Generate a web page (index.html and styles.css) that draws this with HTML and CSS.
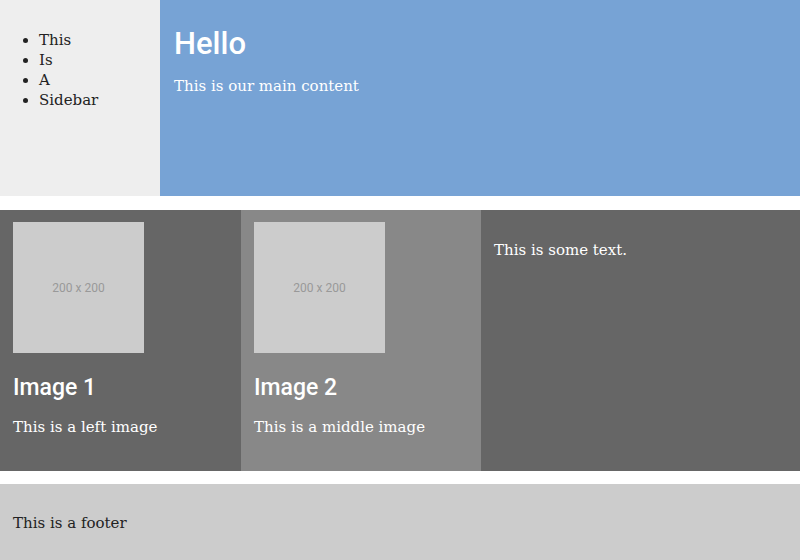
FILE: index.html
```html
<!DOCTYPE html>
<html>
<head>
<meta charset="utf-8">
<link rel="stylesheet" href="styles.css">
</head>
<body>
<div class="page">
  <div class="top">
    <aside class="sidebar">
      <ul class="side-list">
        <li>This</li>
        <li>Is</li>
        <li>A</li>
        <li>Sidebar</li>
      </ul>
    </aside>
    <main class="main">
      <h1 class="title">Hello</h1>
      <p class="text">This is our main content</p>
    </main>
  </div>
  <div class="row">
    <div class="col dark">
      <div class="ph">200 x 200</div>
      <h2 class="sub">Image 1</h2>
      <p class="text">This is a left image</p>
    </div>
    <div class="col mid">
      <div class="ph">200 x 200</div>
      <h2 class="sub">Image 2</h2>
      <p class="text">This is a middle image</p>
    </div>
    <div class="col dark">
      <p class="text first">This is some text.</p>
    </div>
  </div>
  <footer class="footer">
    <p class="text">This is a footer</p>
  </footer>
</div>
</body>
</html>
```

FILE: styles.css
```css
html, body {
  margin: 0;
  padding: 0;
  background: #fff;
}
.page {
  width: 800px;
  height: 560px;
  display: flex;
  flex-direction: column;
  font-family: "DejaVu Serif", serif;
}
.top {
  height: 196px;
  display: flex;
}
.sidebar {
  width: 160px;
  background: #eeeeee;
  color: #222;
}
.side-list {
  margin: 30px 0 0 0;
  padding-left: 39px;
  font-size: 15px;
  line-height: 20px;
}
.main {
  flex: 1;
  background: #77a3d5;
  color: #fff;
  padding: 0 14px;
}
.title {
  font-family: Roboto, sans-serif;
  font-weight: 500;
  font-size: 31px;
  line-height: 38px;
  margin: 25px 0 0 0;
}
.text {
  font-size: 15px;
  line-height: 20px;
  margin: 0;
}
.main .text {
  margin-top: 13px;
}
.row {
  margin-top: 14px;
  height: 261px;
  display: grid;
  grid-template-columns: 241px 240px 319px;
  color: #fff;
}
.col {
  padding: 12px 13px;
}
.dark { background: #666666; }
.mid { background: #888888; }
.ph {
  width: 131px;
  height: 131px;
  background: #cccccc;
  color: #999;
  font-family: Roboto, sans-serif;
  font-size: 12px;
  display: flex;
  align-items: center;
  justify-content: center;
}
.sub {
  font-family: Roboto, sans-serif;
  font-weight: 500;
  font-size: 23px;
  line-height: 30px;
  margin: 20px 0 0 0;
}
.col .text {
  margin-top: 14px;
}
.col .text.first {
  margin-top: 18px;
}
.footer {
  margin-top: 13px;
  flex: 1;
  background: #cccccc;
  color: #222;
  padding: 29px 13px 0;
}
```
